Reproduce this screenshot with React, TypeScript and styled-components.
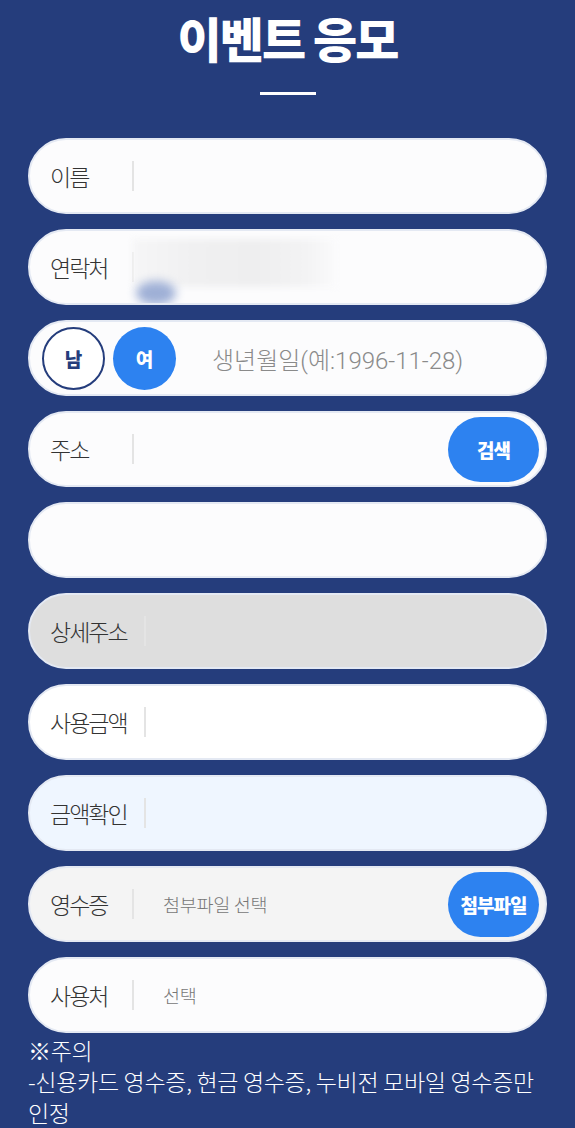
import React from "react";
import styled, { createGlobalStyle } from "styled-components";

const Global = createGlobalStyle`
  html, body { margin: 0; padding: 0; background: #253d7c; }
  body { font-family: "Noto Sans CJK KR", "Noto Sans", sans-serif; }
  * { box-sizing: border-box; }
`;

const Page = styled.div`
  width: 575px;
  height: 1128px;
  overflow: hidden;
  background: #253d7c;
  padding: 0 28px;
  display: flex;
  flex-direction: column;
`;

const Title = styled.h1`
  margin: 0;
  padding-top: 9px;
  text-align: center;
  color: #ffffff;
  font-family: "Noto Sans CJK KR", sans-serif;
  font-weight: 900;
  font-size: 48px;
  line-height: 56px;
  letter-spacing: -2px;
`;

const Bar = styled.div`
  width: 56px;
  height: 4px;
  background: #ffffff;
  align-self: center;
  margin-top: 27px;
  margin-bottom: 43px;
`;

const Form = styled.div`
  display: flex;
  flex-direction: column;
  gap: 15px;
`;

const Row = styled.div<{ $bg?: string }>`
  height: 76px;
  border-radius: 38px;
  background: ${(p) => p.$bg || "#fcfcfd"};
  border: 2px solid #e4e9f3;
  display: flex;
  align-items: center;
  padding: 0 6px 0 20px;
  position: relative;
  overflow: hidden;
`;

const Label = styled.span`
  min-width: 82px;
  padding-right: 17px;
  font-size: 23px;
  font-weight: 300;
  color: #333333;
  white-space: nowrap;
  letter-spacing: -2px;
`;

const Divider = styled.span`
  width: 2px;
  height: 30px;
  background: #e4e4e4;
  flex-shrink: 0;
`;

const Value = styled.span`
  margin-left: 29px;
  font-size: 18.5px;
  font-weight: 300;
  color: #777777;
  flex: 1;
  letter-spacing: -0.3px;
`;

const Spacer = styled.span`
  flex: 1;
`;

const Pill = styled.button`
  width: 91px;
  height: 65px;
  border-radius: 33px;
  border: none;
  background: #2d82f0;
  color: #ffffff;
  font-family: "Noto Sans CJK KR", sans-serif;
  font-weight: 900;
  font-size: 19px;
  letter-spacing: -1px;
  display: flex;
  align-items: center;
  justify-content: center;
  padding: 0;
`;

const GenderRow = styled(Row)`
  padding-left: 12px;
`;

const Gender = styled.span<{ $active?: boolean }>`
  width: 63px;
  height: 63px;
  border-radius: 50%;
  display: flex;
  align-items: center;
  justify-content: center;
  font-weight: 900;
  font-size: 19px;
  flex-shrink: 0;
  background: ${(p) => (p.$active ? "#2d82f0" : "#ffffff")};
  color: ${(p) => (p.$active ? "#ffffff" : "#253d7c")};
  border: ${(p) => (p.$active ? "none" : "2px solid #253d7c")};
  & + & {
    margin-left: 8px;
  }
`;

const Birth = styled.span`
  margin-left: 36px;
  font-family: "Roboto", "Noto Sans CJK KR", sans-serif;
  font-size: 24px;
  font-weight: 300;
  color: #8a8a8a;
  letter-spacing: 0px;
`;

const Redact = styled.span`
  position: absolute;
  left: 102px;
  top: 8px;
  width: 205px;
  height: 48px;
  background: linear-gradient(90deg, #f6f6f7 0%, #f0f0f1 30%, #eeeeef 60%, #f3f3f4 85%, #fbfbfc 100%);
  filter: blur(3px);
`;

const Blob = styled.span`
  position: absolute;
  left: 106px;
  top: 50px;
  width: 40px;
  height: 24px;
  border-radius: 50%;
  background: #9fb0d6;
  filter: blur(5px);
`;

const Notes = styled.div`
  margin-top: 2px;
  color: #ffffff;
  font-size: 23px;
  font-weight: 300;
  line-height: 31px;
  letter-spacing: -0.3px;
`;

export default function App() {
  return (
    <>
      <Global />
      <Page>
        <Title>이벤트 응모</Title>
        <Bar />
        <Form>
          <Row>
            <Label>이름</Label>
            <Divider />
          </Row>
          <Row>
            <Label>연락처</Label>
            <Divider />
            <Redact />
            <Blob />
          </Row>
          <GenderRow>
            <Gender>남</Gender>
            <Gender $active>여</Gender>
            <Birth>생년월일(예:1996-11-28)</Birth>
          </GenderRow>
          <Row>
            <Label>주소</Label>
            <Divider />
            <Spacer />
            <Pill>검색</Pill>
          </Row>
          <Row />
          <Row $bg="#dedede">
            <Label>상세주소</Label>
            <Divider />
          </Row>
          <Row $bg="#ffffff">
            <Label>사용금액</Label>
            <Divider />
          </Row>
          <Row $bg="#eff6ff">
            <Label>금액확인</Label>
            <Divider />
          </Row>
          <Row $bg="#f4f4f4">
            <Label>영수증</Label>
            <Divider />
            <Value>첨부파일 선택</Value>
            <Pill>첨부파일</Pill>
          </Row>
          <Row>
            <Label>사용처</Label>
            <Divider />
            <Value>선택</Value>
          </Row>
        </Form>
        <Notes>
          ※주의
          <br />
          -신용카드 영수증, 현금 영수증, 누비전 모바일 영수증만 인정
        </Notes>
      </Page>
    </>
  );
}
